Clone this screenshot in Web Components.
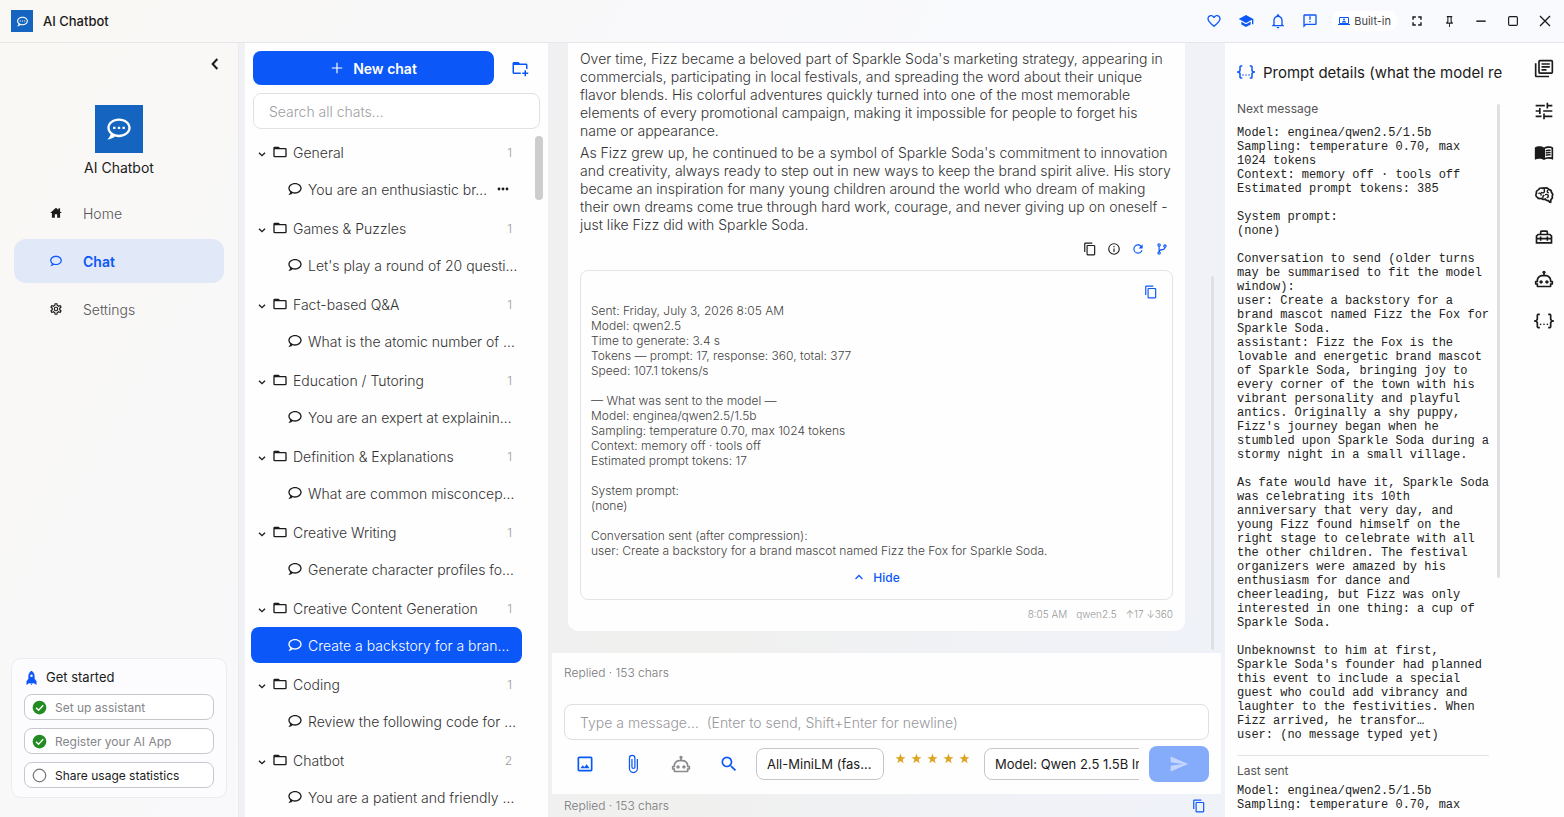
<!DOCTYPE html>
<html lang="en">
<head>
<meta charset="utf-8">
<title>AI Chatbot</title>
<style>
  html, body { margin: 0; height: 100%; }
  body {
    font-family: Inter, "Noto Sans", sans-serif; font-size: 14px; font-weight: 300; color: #222;
    --blue: #0b57f7; --line: #e4e4e6; --ink: #1b1b1b; --soft: #77777b;
  }
</style>
</head>
<body>
<chat-app></chat-app>
<script>
const CHAT = '<path d="M12,3C6.5,3 2,6.58 2,11C2.05,13.15 3.06,15.17 4.75,16.5C4.75,17.1 4.33,18.67 2,21C4.37,20.89 6.64,20 8.47,18.5C9.61,18.83 10.81,19 12,19C17.5,19 22,15.42 22,11C22,6.58 17.5,3 12,3M12,17C7.58,17 4,14.31 4,11C4,7.69 7.58,5 12,5C16.42,5 20,7.69 20,11C20,14.31 16.42,17 12,17Z"/>';
const ICONS = {
  chat: CHAT,
  chatDots: CHAT + '<path d="M7 10h2v2H7zM11 10h2v2h-2zM15 10h2v2h-2z"/>',
  heart: '<path d="M12.1,18.55L12,18.65L11.89,18.55C7.14,14.24 4,11.39 4,8.5C4,6.5 5.5,5 7.5,5C9.04,5 10.54,6 11.07,7.36H12.93C13.46,6 14.96,5 16.5,5C18.5,5 20,6.5 20,8.5C20,11.39 16.86,14.24 12.1,18.55M16.5,3C14.76,3 13.09,3.81 12,5.08C10.91,3.81 9.24,3 7.5,3C4.42,3 2,5.41 2,8.5C2,12.27 5.4,15.36 10.55,20.03L12,21.35L13.45,20.03C18.6,15.36 22,12.27 22,8.5C22,5.41 19.58,3 16.5,3Z"/>',
  school: '<path d="M12,3L1,9L12,15L21,10.09V17H23V9M5,13.18V17.18L12,21L19,17.18V13.18L12,17L5,13.18Z"/>',
  bell: '<path d="M10 21H14C14 22.1 13.1 23 12 23S10 22.1 10 21M21 19V20H3V19L5 17V11C5 7.9 7 5.2 10 4.3V4C10 2.9 10.9 2 12 2S14 2.9 14 4V4.3C17 5.2 19 7.9 19 11V17L21 19M17 11C17 8.2 14.8 6 12 6S7 8.2 7 11V18H17V11Z"/>',
  alert: '<path d="M13,10H11V5H13V10M13,14H11V12H13V14M20,2A2,2 0 0,1 22,4V16A2,2 0 0,1 20,18H6L2,22V4C2,2.89 2.9,2 4,2H20M20,4H4V17.17L5.17,16H20V4Z"/>',
  laptop: '<path d="M20 18a2 2 0 0 0 2-2V6a2 2 0 0 0-2-2H4a2 2 0 0 0-2 2v10a2 2 0 0 0 2 2H0v2h24v-2zM4 6h16v10H4z"/><circle cx="12" cy="9" r="2"/><path d="M8 15v-1c0-1.300 2.700-2 4-2s4 .7 4 2v1z"/>',
  full: '<path d="M4,4H10V6.500H6.500V10H4V4M14,4H20V10H17.500V6.500H14V4M17.500,14H20V20H14V17.500H17.500V14M10,17.500V20H4V14H6.500V17.500H10Z"/>',
  pin: '<path d="M16,12V4H17V2H7V4H8V12L6,14V16H11.200V22H12.800V16H18V14L16,12M8.800,14L10,12.800V4H14V12.800L15.200,14H8.800Z"/>',
  min: '<path d="M4 11h16v2.500H4z"/>',
  max: '<rect x="4.500" y="4.500" width="15" height="15" rx="2" fill="none" stroke="currentColor" stroke-width="2"/>',
  close: '<path d="M4.500 4.500l15 15M19.500 4.500l-15 15" fill="none" stroke="currentColor" stroke-width="2"/>',
  left: '<path d="M16 3.500L8 12l8 8.500" fill="none" stroke="currentColor" stroke-width="3.500"/>',
  down: '<path d="M3 8l9 9 9-9" fill="none" stroke="currentColor" stroke-width="4"/>',
  up: '<path d="M5 16l7-7 7 7" fill="none" stroke="currentColor" stroke-width="2.500"/>',
  home: '<path d="M10,20V14H14V20H19V12H22L12,3L2,12H5V20H10Z"/><path d="M16 4h3v5h-3z"/>',
  cog: '<path d="M12,8A4,4 0 0,1 16,12A4,4 0 0,1 12,16A4,4 0 0,1 8,12A4,4 0 0,1 12,8M12,10A2,2 0 0,0 10,12A2,2 0 0,0 12,14A2,2 0 0,0 14,12A2,2 0 0,0 12,10M10,22C9.750,22 9.540,21.820 9.500,21.580L9.130,18.930C8.500,18.680 7.960,18.340 7.440,17.940L4.950,18.950C4.730,19.030 4.460,18.950 4.340,18.730L2.340,15.270C2.210,15.050 2.270,14.780 2.460,14.630L4.570,12.970L4.500,12L4.570,11L2.460,9.370C2.270,9.220 2.210,8.950 2.340,8.730L4.340,5.270C4.460,5.050 4.730,4.960 4.950,5.050L7.440,6.050C7.960,5.660 8.500,5.320 9.130,5.070L9.500,2.420C9.540,2.180 9.750,2 10,2H14C14.250,2 14.460,2.180 14.500,2.420L14.870,5.070C15.500,5.320 16.040,5.660 16.560,6.050L19.050,5.050C19.270,4.960 19.540,5.050 19.660,5.270L21.660,8.730C21.790,8.950 21.730,9.220 21.540,9.370L19.430,11L19.500,12L19.430,13L21.540,14.630C21.730,14.780 21.790,15.050 21.660,15.270L19.660,18.730C19.540,18.950 19.270,19.040 19.050,18.950L16.560,17.950C16.040,18.340 15.500,18.680 14.870,18.930L14.500,21.580C14.460,21.820 14.250,22 14,22H10M11.250,4L10.880,6.610C9.680,6.860 8.620,7.500 7.850,8.390L5.440,7.350L4.690,8.650L6.800,10.200C6.400,11.370 6.400,12.640 6.800,13.800L4.680,15.360L5.430,16.660L7.860,15.620C8.630,16.500 9.680,17.140 10.870,17.380L11.240,20H12.760L13.130,17.390C14.320,17.140 15.370,16.500 16.140,15.620L18.570,16.660L19.320,15.360L17.200,13.810C17.600,12.640 17.600,11.370 17.200,10.200L19.310,8.650L18.560,7.350L16.150,8.390C15.380,7.500 14.320,6.860 13.120,6.620L12.750,4H11.250Z"/>',
  rocket: '<path d="M12 1C9 3 7 6 7 10v4l-3 4v6l4-3h8l4 3v-6l-3-4v-4c0-4-2-7-5-9zm0 6a2 2 0 1 1 0 4 2 2 0 0 1 0-4z"/><path d="M10 21.500h4L12 24z"/>',
  check: '<circle cx="12" cy="12" r="11" fill="#228b22"/><path d="M6.500 12.500l4 4 7.500-8" fill="none" stroke="#fff" stroke-width="2.200"/>',
  circle: '<circle cx="12" cy="12" r="10" fill="none" stroke="#77777b" stroke-width="2"/>',
  plus: '<path d="M11 3h2v8h8v2h-8v8h-2v-8H3v-2h8z"/>',
  folder: '<path d="M20,18H4V8H20M20,6H12L10,4H4C2.890,4 2,4.890 2,6V18A2,2 0 0,0 4,20H20A2,2 0 0,0 22,18V8C22,6.890 21.100,6 20,6Z"/>',
  folderPlus: '<path d="M13 19C13 19.340 13.040 19.670 13.090 20H4C2.900 20 2 19.110 2 18V6C2 4.890 2.890 4 4 4H10L12 6H20C21.100 6 22 6.890 22 8V13.810C21.390 13.460 20.720 13.220 20 13.090V8H4V18H13.090C13.040 18.330 13 18.660 13 19M20 18V15H18V18H15V20H18V23H20V20H23V18H20Z"/>',
  dots: '<circle cx="4" cy="12" r="2.800"/><circle cx="12" cy="12" r="2.800"/><circle cx="20" cy="12" r="2.800"/>',
  copy: '<path d="M19,21H8V7H19M19,5H8A2,2 0 0,0 6,7V21A2,2 0 0,0 8,23H19A2,2 0 0,0 21,21V7A2,2 0 0,0 19,5M16,1H4A2,2 0 0,0 2,3V17H4V3H16V1Z"/>',
  info: '<path d="M11,9H13V7H11M12,20C7.590,20 4,16.410 4,12C4,7.590 7.590,4 12,4C16.410,4 20,7.590 20,12C20,16.410 16.410,20 12,20M12,2A10,10 0 0,0 2,12A10,10 0 0,0 12,22A10,10 0 0,0 22,12A10,10 0 0,0 12,2M11,17H13V11H11V17Z"/>',
  refresh: '<path d="M17.650,6.350C16.200,4.900 14.210,4 12,4A8,8 0 0,0 4,12A8,8 0 0,0 12,20C15.730,20 18.840,17.450 19.730,14H17.650C16.830,16.330 14.610,18 12,18A6,6 0 0,1 6,12A6,6 0 0,1 12,6C13.660,6 15.140,6.690 16.220,7.780L13,11H20V4L17.650,6.350Z"/>',
  branch: '<path d="M13,14C9.640,14 8.540,15.350 8.180,16.240C9.250,16.700 10,17.760 10,19A3,3 0 0,1 7,22A3,3 0 0,1 4,19C4,17.690 4.830,16.580 6,16.170V7.830C4.830,7.420 4,6.310 4,5A3,3 0 0,1 7,2A3,3 0 0,1 10,5C10,6.310 9.170,7.420 8,7.830V13.120C8.880,12.470 10.160,12 12,12C14.670,12 15.560,10.660 15.850,9.770C14.770,9.320 14,8.250 14,7A3,3 0 0,1 17,4A3,3 0 0,1 20,7C20,8.340 19.120,9.500 17.910,9.860C17.650,11.290 16.680,14 13,14M7,18A1,1 0 0,0 6,19A1,1 0 0,0 7,20A1,1 0 0,0 8,19A1,1 0 0,0 7,18M7,4A1,1 0 0,0 6,5A1,1 0 0,0 7,6A1,1 0 0,0 8,5A1,1 0 0,0 7,4M17,6A1,1 0 0,0 16,7A1,1 0 0,0 17,8A1,1 0 0,0 18,7A1,1 0 0,0 17,6Z"/>',
  image: '<path d="M19,19H5V5H19M19,3H5A2,2 0 0,0 3,5V19A2,2 0 0,0 5,21H19A2,2 0 0,0 21,19V5A2,2 0 0,0 19,3M13.960,12.290L11.210,15.830L9.250,13.470L6.500,17H17.500L13.960,12.290Z"/>',
  clip: '<path d="M16.500,6V17.500A4,4 0 0,1 12.500,21.500A4,4 0 0,1 8.500,17.500V5A2.500,2.500 0 0,1 11,2.500A2.500,2.500 0 0,1 13.500,5V15.500A1,1 0 0,1 12.500,16.500A1,1 0 0,1 11.500,15.500V6H10V15.500A2.500,2.500 0 0,0 12.500,18A2.500,2.500 0 0,0 15,15.500V5A4,4 0 0,0 11,1A4,4 0 0,0 7,5V17.500A5.500,5.500 0 0,0 12.500,23A5.500,5.500 0 0,0 18,17.500V6H16.500Z"/>',
  robot: '<path d="M17.500 15.500C17.500 16.610 16.610 17.500 15.500 17.500S13.500 16.610 13.500 15.500 14.400 13.500 15.500 13.500 17.500 14.400 17.500 15.500M8.500 13.500C7.400 13.500 6.500 14.400 6.500 15.500S7.400 17.500 8.500 17.500 10.500 16.610 10.500 15.500 9.610 13.500 8.500 13.500M23 15V18C23 18.550 22.550 19 22 19H21V20C21 21.110 20.110 22 19 22H5C3.900 22 3 21.110 3 20V19H2C1.450 19 1 18.550 1 18V15C1 14.450 1.450 14 2 14H3C3 10.130 6.130 7 10 7H11V5.730C10.400 5.390 10 4.740 10 4C10 2.900 10.900 2 12 2S14 2.900 14 4C14 4.740 13.600 5.390 13 5.730V7H14C17.870 7 21 10.130 21 14H22C22.550 14 23 14.450 23 15M21 16H19V14C19 11.240 16.760 9 14 9H10C7.240 9 5 11.240 5 14V16H3V17H5V20H19V17H21V16Z"/>',
  search: '<path d="M9.500,3A6.500,6.500 0 0,1 16,9.500C16,11.110 15.410,12.590 14.440,13.730L14.710,14H15.500L20.500,19L19,20.500L14,15.500V14.710L13.730,14.440C12.590,15.410 11.110,16 9.500,16A6.500,6.500 0 0,1 3,9.500A6.500,6.500 0 0,1 9.500,3M9.500,5C7,5 5,7 5,9.500C5,12 7,14 9.500,14C12,14 14,12 14,9.500C14,7 12,5 9.500,5Z"/>',
  send: '<path d="M2,21L23,12L2,3V10L17,12L2,14V21Z"/>',
  star: '<path d="M12 1l2.900 8H23l-6.500 5 2.400 8.500L12 17.500 5.100 22.500 7.500 14 1 9h8.100z"/>',
  docs: '<path d="M7 1h14a2 2 0 0 1 2 2v13a2 2 0 0 1-2 2H7a2 2 0 0 1-2-2V3a2 2 0 0 1 2-2zm0 2v13h14V3z" fill-rule="evenodd"/><path d="M9 5h10v2H9zM9 8.500h10v2H9zM9 12h6v2H9zM1 5h2v15h15v2H3a2 2 0 0 1-2-2z"/>',
  tune: '<path d="M2 4.500h11v2H2zM15 2h2v2.500h5v2h-5V9h-2zM2 11h4V8.500h2v7H6V13H2zM11 11h11v2H11zM2 17.500h7v2H2zM11 15h2v2.500h9v2h-9V22h-2z"/>',
  book: '<path d="M12 5.500C10.500 4.500 8.500 4 6.500 4 4.500 4 2.500 4.400 1 5.500V20c1.500-.8 3.500-1.200 5.500-1.200 2 0 4 .4 5.500 1.700 1.500-1.300 3.500-1.700 5.500-1.700s4 .4 5.500 1.200V5.500C21.500 4.400 19.500 4 17.500 4s-4 .5-5.500 1.500zm9 11.700c-1.100-.3-2.300-.4-3.500-.4-1.400 0-3.100.3-4.300.9V7c1.200-.7 2.900-1 4.300-1 1.200 0 2.400.1 3.500.5z" fill-rule="evenodd"/><path d="M14 8.500c2-.7 4.200-.8 6-.3v1.500c-2-.4-4-.3-6 .4zM14 11.200c2-.7 4.200-.8 6-.3v1.500c-2-.4-4-.3-6 .4zM14 13.900c2-.7 4.200-.8 6-.3v1.500c-2-.4-4-.3-6 .4z"/>',
  brain: '<g fill="none" stroke="currentColor" stroke-linecap="round" stroke-linejoin="round"><path stroke-width="2" d="M10 4C8 3 6 4 5.500 5.700 3.500 6.200 2.300 8 3 10c-1.200 1.500-.8 4 1 4.700 1 1.700 3 2 4.800 1.300 1.200 1.300 3.200 1.400 4.700.7.800 1.800 2.500 2.300 4 2 .5 1.300 1.300 2.300 2.500 2.300l.3-3.500c1.700-1 2.100-2.500 1.500-4 1-1.700.6-3.500-.8-4.500 0-2.200-1.500-3.500-3.200-3.700C16.500 3.500 14 2.700 12.500 4 11.700 3.300 10.700 3.300 10 4z"/><path stroke-width="1.700" d="M12.500 4c-.8 2 .7 3-.3 4.500-.6 1-2 1.200-3 .5M5.800 10c1.700-.7 2.900.3 2.700 2M12 12.500c-1.100.2-1.600 1.200-1.200 2.500M16.500 6.500c-1 1.300-.7 2.300.5 2.700M14 11.500c1.500-.7 3 .2 3.200 1.700.1 1-.4 1.600-1.200 1.800"/></g>',
  toolbox: '<path d="M9 4h6a2 2 0 0 1 2 2v2h2.500L22 10.500V20H2v-9.500L4.500 8H7V6a2 2 0 0 1 2-2zm0 2v2h6V6zM5.300 10L4 11.300V13h3v-1.500h2V13h6v-1.500h2V13h3v-1.700L18.700 10zM4 15v3h16v-3h-3v1.500h-2V15H9v1.500H7V15z" fill-rule="evenodd"/>',
  json: '<path d="M5,3H7V5H5V10A2,2 0 0,1 3,12A2,2 0 0,1 5,14V19H7V21H5C3.930,20.730 3,20.100 3,19V15A2,2 0 0,0 1,13H0V11H1A2,2 0 0,0 3,9V5A2,2 0 0,1 5,3M19,3A2,2 0 0,1 21,5V9A2,2 0 0,0 23,11H24V13H23A2,2 0 0,0 21,15V19A2,2 0 0,1 19,21H17V19H19V14A2,2 0 0,1 21,12A2,2 0 0,1 19,10V5H17V3H19M12,15A1,1 0 0,1 13,16A1,1 0 0,1 12,17A1,1 0 0,1 11,16A1,1 0 0,1 12,15M8,15A1,1 0 0,1 9,16A1,1 0 0,1 8,17A1,1 0 0,1 7,16A1,1 0 0,1 8,15M16,15A1,1 0 0,1 17,16A1,1 0 0,1 16,17A1,1 0 0,1 15,16A1,1 0 0,1 16,15Z"/>'
};

const RESET = `
  *, *::before, *::after { box-sizing: border-box; }
  button, input, select { font: inherit; color: inherit; margin: 0; }
  button { border: 0; background: none; padding: 0; display: flex; align-items: center; justify-content: center; cursor: pointer; }
  a { color: inherit; text-decoration: none; }
  p, h1, h2, ul { margin: 0; padding: 0; font-weight: inherit; font-size: inherit; list-style: none; }
`;
function define(name, css, html) {
  customElements.define(name, class extends HTMLElement {
    constructor() {
      super();
      const render = typeof html === 'function' ? html : () => html;
      this.attachShadow({ mode: 'open' }).innerHTML = `<style>${RESET}${css}</style>${render(this)}`;
    }
  });
}
const icon = (name, size) => `<ui-icon name="${name}" style="--size:${size}px"></ui-icon>`;

customElements.define('ui-icon', class extends HTMLElement {
  connectedCallback() {
    if (this.shadowRoot) return;
    this.attachShadow({ mode: 'open' }).innerHTML =
      `<style>:host{display:inline-flex;flex:none;width:var(--size,16px);height:var(--size,16px)}svg{width:100%;height:100%;display:block}</style>
       <svg viewBox="0 0 24 24" fill="currentColor" aria-hidden="true">${ICONS[this.getAttribute('name')]}</svg>`;
  }
});

define('app-logo', `
  :host { display: inline-flex; flex: none; background: #1565c0; color: #fff; align-items: center; justify-content: center; }
`, el => icon('chatDots', el.getAttribute('glyph') || 28));

define('title-bar', `
  :host { display: flex; align-items: center; height: 43px; padding: 0 3px 0 11px; border-bottom: 1px solid #e6e7ea; flex: none; }
  app-logo { width: 22px; height: 22px; }
  h1 { margin-left: 10px; font-size: 13px; font-weight: 500; flex: 1; color: var(--ink); }
  button { width: 32px; height: 32px; color: var(--ink); }
  .blue { color: var(--blue); }
  .pill { width: auto; height: 20px; margin: 0 4px 0 6px; padding: 0 6px; gap: 4px; border-radius: 8px; background: #fff; font-size: 11px; font-weight: 400; color: #444; white-space: nowrap; }
  .pill ui-icon { color: var(--blue); }
`, `
  <app-logo glyph="13"></app-logo><h1>AI Chatbot</h1>
  <button class="blue" aria-label="Favourites">${icon('heart', 16)}</button>
  <button class="blue" aria-label="Learn">${icon('school', 16)}</button>
  <button class="blue" aria-label="Notifications">${icon('bell', 16)}</button>
  <button class="blue" aria-label="Feedback">${icon('alert', 16)}</button>
  <button class="pill">${icon('laptop', 12)}Built-in</button>
  <button aria-label="Full screen">${icon('full', 14)}</button>
  <button aria-label="Pin">${icon('pin', 13)}</button>
  <button aria-label="Minimise">${icon('min', 14)}</button>
  <button aria-label="Maximise">${icon('max', 14)}</button>
  <button aria-label="Close">${icon('close', 16)}</button>
`);

define('nav-item', `
  a { display: flex; align-items: center; height: 44px; padding-left: 35px; gap: 20px; border-radius: 12px; color: #555; }
  :host { display: block; }
  ui-icon { color: var(--ink); }
  :host([active]) a { background: #e1e8f8; color: var(--blue); font-weight: 600; }
  :host([active]) ui-icon { color: var(--blue); }
`, el => `<a href="#">${icon(el.getAttribute('icon'), 14)}<slot></slot></a>`);

define('setup-step', `
  :host { display: block; }
  button { width: 100%; height: 26px; justify-content: flex-start; gap: 8px; padding: 0 7px; border: 1px solid #c8c8cc; border-radius: 8px; background: #fff; font-size: 12px; font-weight: 400; color: var(--ink); }
  :host([done]) button { color: #85858a; }
`, el => `<button>${icon(el.hasAttribute('done') ? 'check' : 'circle', 15)}<slot></slot></button>`);

define('nav-sidebar', `
  :host { display: flex; flex-direction: column; width: 239px; flex: none; border-right: 1px solid #e9eaee; }
  .collapse { width: 24px; height: 24px; margin: 9px 11px 0 auto; color: var(--ink); }
  .brand { display: flex; flex-direction: column; align-items: center; gap: 6px; margin-top: 29px; font-size: 14px; line-height: 18px; font-weight: 400; color: var(--ink); }
  app-logo { width: 48px; height: 48px; }
  nav { display: flex; flex-direction: column; gap: 4px; margin: 14px 14px 0; }
  .card { margin: auto 11px 19px; padding: 9px 12px; border: 1px solid #ececf0; border-radius: 10px; background: #fcfcfe; display: flex; flex-direction: column; gap: 8px; }
  h2 { display: flex; align-items: center; gap: 7px; height: 18px; font-size: 13px; font-weight: 400; color: var(--ink); }
  h2 ui-icon { color: var(--blue); }
`, `
  <button class="collapse" aria-label="Collapse">${icon('left', 14)}</button>
  <div class="brand"><app-logo glyph="28"></app-logo>AI Chatbot</div>
  <nav>
    <nav-item icon="home">Home</nav-item>
    <nav-item icon="chat" active>Chat</nav-item>
    <nav-item icon="cog">Settings</nav-item>
  </nav>
  <section class="card">
    <h2>${icon('rocket', 15)}Get started</h2>
    <setup-step done>Set up assistant</setup-step>
    <setup-step done>Register your AI App</setup-step>
    <setup-step>Share usage statistics</setup-step>
  </section>
`);

define('chat-group', `
  :host { display: block; }
  .head { display: flex; align-items: center; width: 100%; height: 38px; padding: 0 10px 0 7px; gap: 6px; text-align: left; color: #333; }
  .head > ui-icon:first-child { padding-top: 4px; height: 12px; }
  .head ui-icon { color: var(--ink); }
  .name { flex: 1; margin-left: -1px; white-space: nowrap; }
  .count { font-size: 12px; color: #999; }
  slot { display: block; }
`, el => `<button class="head">${icon('down', 8)}${icon('folder', 16)}<span class="name">${el.getAttribute('name')}</span><span class="count">${el.getAttribute('count')}</span></button><slot></slot>`);

define('chat-row', `
  :host { display: block; margin-bottom: 2px; }
  a { display: flex; align-items: center; height: 36px; padding: 0 9px 0 36px; gap: 5px; border-radius: 8px; white-space: nowrap; color: #333; }
  ui-icon { color: var(--ink); }
  span { flex: 1; }
  :host([active]) a { background: var(--blue); color: #fff; }
  :host([active]) ui-icon { color: #fff; }
  .more { margin-right: 4px; }
`, el => `<a href="#">${icon('chat', 16)}<span><slot></slot></span>${el.hasAttribute('menu') ? '<button class="more" aria-label="More">' + icon('dots', 12) + '</button>' : ''}</a>`);

const GROUPS = [
  ['General', 1, 'You are an enthusiastic br…', 'menu'],
  ['Games &amp; Puzzles', 1, "Let's play a round of 20 questi…", ''],
  ['Fact-based Q&amp;A', 1, 'What is the atomic number of …', ''],
  ['Education / Tutoring', 1, 'You are an expert at explainin…', ''],
  ['Definition &amp; Explanations', 1, 'What are common misconcep…', ''],
  ['Creative Writing', 1, 'Generate character profiles fo…', ''],
  ['Creative Content Generation', 1, 'Create a backstory for a bran…', 'active'],
  ['Coding', 1, 'Review the following code for …', ''],
  ['Chatbot', 2, 'You are a patient and friendly …', '']
];
define('chat-list', `
  :host { display: flex; flex-direction: column; width: 303px; flex: none; background: #fefefe; padding: 8px 5px 0 6px; }
  .top { display: flex; gap: 6px; padding: 0 3px 0 2px; }
  .new { flex: 1; height: 34px; gap: 9px; border-radius: 8px; background: var(--blue); color: #fff; font-weight: 600; font-size: 14px; }
  .add { width: 40px; color: var(--blue); }
  input { width: auto; height: 36px; margin: 8px 3px 4px 2px; padding: 0 15px; border: 1px solid #e2e2e5; border-radius: 8px; background: #fff; outline: 0; }
  input::placeholder { color: #9d9da2; opacity: 1; }
  .scroll { flex: 1; min-height: 0; display: flex; overflow: hidden; }
  .rows { flex: 1; min-width: 0; }
  .thumb { width: 8px; height: 64px; margin: 3px 0 0 13px; border-radius: 4px; background: #cdcdcd; }
`, `
  <div class="top"><button class="new">${icon('plus', 14)}New chat</button><button class="add" aria-label="New folder">${icon('folderPlus', 18)}</button></div>
  <input type="search" placeholder="Search all chats…" aria-label="Search all chats">
  <div class="scroll"><div class="rows">
    ${GROUPS.map(([g, n, t, a]) => `<chat-group name="${g}" count="${n}"><chat-row ${a}>${t}</chat-row></chat-group>`).join('')}
  </div><div class="thumb"></div></div>
`);

define('message-view', `
  :host { flex: 1; min-height: 0; display: flex; overflow: hidden; padding: 0 11px 0 20px; gap: 26px; justify-content: space-between; }
  .stack { flex: 1; min-width: 0; display: flex; flex-direction: column; justify-content: flex-end; padding-bottom: 22px; }
  article { background: #fefefe; border-radius: 0 0 10px 10px; padding: 7px 12px 10px; }
  p { line-height: 18px; color: #333; margin-bottom: 4px; white-space: nowrap; }
  .actions { display: flex; justify-content: flex-end; gap: 10px; height: 22px; margin: 4px 4px 10px; color: var(--ink); align-items: center; }
  .actions .b { color: var(--blue); }
  .details { border: 1px solid var(--line); border-radius: 8px; height: 330px; padding: 12px 10px; display: flex; flex-direction: column; }
  .details > .copy { align-self: flex-end; width: 22px; height: 18px; color: var(--blue); }
  pre { margin: 2px 0 9px; font: inherit; font-size: 12px; line-height: 15px; color: #444; white-space: pre-wrap; }
  .hide { gap: 8px; height: 20px; font-size: 12px; font-weight: 500; color: var(--blue); align-self: center; }
  footer { display: flex; justify-content: flex-end; gap: 9px; margin-top: 7px; font-size: 10px; line-height: 14px; color: #999; }
  .thumb { width: 3px; margin: 233px 0 3px; border-radius: 2px; background: #dfe0e4; }
`, `
  <div class="stack"><article>
    <p>Over time, Fizz became a beloved part of Sparkle Soda's marketing strategy, appearing in<br>commercials, participating in local festivals, and spreading the word about their unique<br>flavor blends. His colorful adventures quickly turned into one of the most memorable<br>elements of every promotional campaign, making it impossible for people to forget his<br>name or appearance.</p>
    <p>As Fizz grew up, he continued to be a symbol of Sparkle Soda's commitment to innovation<br>and creativity, always ready to step out in new ways to keep the brand spirit alive. His story<br>became an inspiration for many young children around the world who dream of making<br>their own dreams come true through hard work, courage, and never giving up on oneself -<br>just like Fizz did with Sparkle Soda.</p>
    <div class="actions"><button aria-label="Copy">${icon('copy', 14)}</button><button aria-label="Info">${icon('info', 14)}</button><button class="b" aria-label="Regenerate">${icon('refresh', 14)}</button><button class="b" aria-label="Branch">${icon('branch', 14)}</button></div>
    <section class="details">
      <button class="copy" aria-label="Copy details">${icon('copy', 14)}</button>
      <pre>Sent: Friday, July 3, 2026 8:05 AM
Model: qwen2.5
Time to generate: 3.4 s
Tokens — prompt: 17, response: 360, total: 377
Speed: 107.1 tokens/s

— What was sent to the model —
Model: enginea/qwen2.5/1.5b
Sampling: temperature 0.70, max 1024 tokens
Context: memory off · tools off
Estimated prompt tokens: 17

System prompt:
(none)

Conversation sent (after compression):
user: Create a backstory for a brand mascot named Fizz the Fox for Sparkle Soda.</pre>
      <button class="hide">${icon('up', 12)}Hide</button>
    </section>
    <footer><span>8:05 AM</span><span>qwen2.5</span><span>↑17 ↓360</span></footer>
  </article></div>
  <div class="thumb"></div>
`);

define('star-rating', `
  :host { display: flex; gap: 5px; color: #daa520; align-self: flex-start; padding-top: 7px; }
`, icon('star', 11).repeat(5));

define('message-composer', `
  :host { display: block; flex: none; margin: 0 4px; padding: 12px 12px 12px; background: #fefefe; }
  .status { font-size: 12px; line-height: 16px; color: var(--soft); }
  input { display: block; width: 100%; height: 36px; margin: 23px 0 6px; padding: 0 15px; border: 1px solid #dfdfe2; border-radius: 8px; background: #fff; outline: 0; }
  input::placeholder { color: #98989d; opacity: 1; }
  .bar { display: flex; align-items: center; height: 36px; }
  .tool { width: 42px; margin-right: 6px; height: 36px; color: var(--blue); }
  .off { color: #8a8a8e; }
  select { appearance: none; height: 32px; padding: 0 10px; border: 1px solid #c6c6ca; border-radius: 8px; background: #fff; font-size: 13px; font-weight: 400; color: var(--ink); }
  .embed { width: 128px; flex: none; }
  .clip { flex: 1; min-width: 0; overflow: hidden; margin-left: 14px; display: flex; }
  .clip select { flex: none; }
  .send { width: 60px; height: 36px; flex: none; margin-left: 10px; border-radius: 8px; background: #85abfb; color: #c4d6fd; }
  star-rating { margin-left: 11px; }
`, `
  <div class="status">Replied · 153 chars</div>
  <input placeholder="Type a message…  (Enter to send, Shift+Enter for newline)" aria-label="Message">
  <div class="bar">
    <button class="tool" aria-label="Image">${icon('image', 20)}</button>
    <button class="tool" aria-label="Attach">${icon('clip', 20)}</button>
    <button class="tool off" aria-label="Agent">${icon('robot', 20)}</button>
    <button class="tool" aria-label="Search">${icon('search', 20)}</button>
    <select class="embed" aria-label="Embedding model"><option>All-MiniLM (fas…</option></select>
    <star-rating></star-rating>
    <div class="clip"><select aria-label="Model"><option>Model: Qwen 2.5 1.5B Instruct</option></select></div>
    <button class="send" aria-label="Send">${icon('send', 20)}</button>
  </div>
`);

define('chat-status', `
  :host { display: flex; flex: none; align-items: center; justify-content: space-between; height: 23px; padding: 0 19px 0 16px; font-size: 12px; color: var(--soft); }
  button { color: var(--blue); }
`, `<span>Replied · 153 chars</span><button aria-label="Copy status">${icon('copy', 14)}</button>`);

define('prompt-panel', `
  :host { display: flex; flex-direction: column; width: 299px; flex: none; background: #fefefe; padding: 0 16px 7px 12px; }
  h2 { display: flex; align-items: center; gap: 8px; height: 24px; margin-top: 17px; font-size: 15px; font-weight: 400; color: var(--ink); white-space: nowrap; overflow: hidden; }
  h2 ui-icon { color: var(--blue); }
  .body { flex: 1; min-height: 0; margin-top: 16px; display: flex; justify-content: space-between; overflow: hidden; padding-right: 8px; }
  .text { width: 252px; }
  .label { font-size: 12px; font-weight: 400; line-height: 18px; color: #555; }
  pre { margin: 8px 0 0; font: 12px/14px "Liberation Mono", monospace; color: #222; }
  hr { border: 0; border-top: 1px solid #e3e3e6; margin: 13px 0 6px; }
  hr ~ pre { margin-top: 4px; }
  .thumb { width: 3px; height: 474px; margin-top: 4px; border-radius: 2px; background: #e0e0e2; }
`, `
  <h2>${icon('json', 18)}<span>Prompt details (what the model re</span></h2>
  <div class="body"><div class="text">
    <div class="label">Next message</div>
<pre>Model: enginea/qwen2.5/1.5b
Sampling: temperature 0.70, max
1024 tokens
Context: memory off · tools off
Estimated prompt tokens: 385

System prompt:
(none)

Conversation to send (older turns
may be summarised to fit the model
window):
user: Create a backstory for a
brand mascot named Fizz the Fox for
Sparkle Soda.
assistant: Fizz the Fox is the
lovable and energetic brand mascot
of Sparkle Soda, bringing joy to
every corner of the town with his
vibrant personality and playful
antics. Originally a shy puppy,
Fizz's journey began when he
stumbled upon Sparkle Soda during a
stormy night in a small village.

As fate would have it, Sparkle Soda
was celebrating its 10th
anniversary that very day, and
young Fizz found himself on the
right stage to celebrate with all
the other children. The festival
organizers were amazed by his
enthusiasm for dance and
cheerleading, but Fizz was only
interested in one thing: a cup of
Sparkle Soda.

Unbeknownst to him at first,
Sparkle Soda's founder had planned
this event to include a special
guest who could add vibrancy and
laughter to the festivities. When
Fizz arrived, he transfor…
user: (no message typed yet)</pre>
    <hr>
    <div class="label">Last sent</div>
<pre>Model: enginea/qwen2.5/1.5b
Sampling: temperature 0.70, max</pre>
  </div><div class="thumb"></div></div>
`);

define('tool-rail', `
  :host { display: flex; flex-direction: column; align-items: center; width: 40px; flex: none; background: #fefefe; padding-top: 5px; }
  button { width: 40px; height: 42px; color: var(--ink); }
`, [['docs', 'Prompts'], ['tune', 'Parameters'], ['book', 'Knowledge'], ['brain', 'Memory'], ['toolbox', 'Tools'], ['robot', 'Agents'], ['json', 'Prompt details']]
  .map(([i, l]) => `<button aria-label="${l}">${icon(i, 20)}</button>`).join(''));

define('chat-app', `
  :host { display: flex; flex-direction: column; height: 100vh; overflow: hidden; background: linear-gradient(120deg, #faf8f4 0%, #f8f8f9 25%, #f9fafe 60%, #f9fafe 100%); }
  .cols { flex: 1; min-height: 0; display: flex; }
  .split { width: 6px; flex: none; background: #f0f1f5; }
  main { flex: 1; min-width: 0; display: flex; flex-direction: column; background: linear-gradient(100deg, #f0f0f2 0%, #f0f0ee 30%, #f0f2f8 80%, #f0f2f9 100%); }
`, `
  <title-bar></title-bar>
  <div class="cols">
    <nav-sidebar></nav-sidebar><div class="split"></div><chat-list></chat-list>
    <main><message-view></message-view><message-composer></message-composer><chat-status></chat-status></main>
    <prompt-panel></prompt-panel><tool-rail></tool-rail>
  </div>
`);
</script>
</body>
</html>
